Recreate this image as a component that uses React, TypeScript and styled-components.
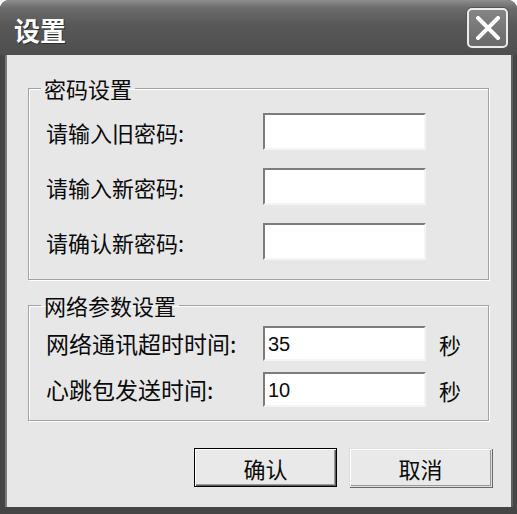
import React from "react"
import styled, { createGlobalStyle } from "styled-components"

const GlobalStyle = createGlobalStyle`
    html, body {
        margin: 0;
        padding: 0;
        background: #ffffff;
    }
    body {
        font-family: "Noto Sans CJK SC", "Liberation Sans", sans-serif;
        color: #0a0a0a;
    }
`

const cjk = `"Noto Sans CJK SC", "Liberation Sans", sans-serif`

interface GroupProps {
    title: string
    $pt: number
    $pb: number
    $gap: number
    children: React.ReactNode
}

const Group: React.FC<GroupProps> = ({ title, $pt, $pb, $gap, children }) => (
    <S.Fieldset $pt={$pt} $pb={$pb}>
        <S.Legend>{title}</S.Legend>
        <S.Grid $gap={$gap}>{children}</S.Grid>
    </S.Fieldset>
)

const CloseIcon = () => (
    <svg width="24" height="24" viewBox="0 0 24 24">
        <path d="M2 2 L22 22 M22 2 L2 22" stroke="#ffffff" strokeWidth="4" strokeLinecap="square" />
    </svg>
)

export default function App() {
    return (
        <>
            <GlobalStyle />
            <S.Window>
                <S.TitleBar>
                    <S.Title>设置</S.Title>
                    <S.CloseButton aria-label="关闭">
                        <CloseIcon />
                    </S.CloseButton>
                </S.TitleBar>
                <S.Body>
                    <Group title="密码设置" $pt={14} $pb={19} $gap={18}>
                        <S.Label $size={22}>请输入旧密码:</S.Label>
                        <S.Input type="password" $h={37} />
                        <span />
                        <S.Label $size={22}>请输入新密码:</S.Label>
                        <S.Input type="password" $h={37} />
                        <span />
                        <S.Label $size={22}>请确认新密码:</S.Label>
                        <S.Input type="password" $h={37} />
                        <span />
                    </Group>
                    <Group title="网络参数设置" $pt={10} $pb={13} $gap={11}>
                        <S.Label $size={23}>网络通讯超时时间:</S.Label>
                        <S.Input defaultValue="35" $h={35} />
                        <S.Unit>秒</S.Unit>
                        <S.Label $size={23}>心跳包发送时间:</S.Label>
                        <S.Input defaultValue="10" $h={35} />
                        <S.Unit>秒</S.Unit>
                    </Group>
                    <S.ButtonRow>
                        <S.Button $default>确认</S.Button>
                        <S.Button>取消</S.Button>
                    </S.ButtonRow>
                </S.Body>
            </S.Window>
        </>
    )
}

const S = {
    Window: styled.div`
        width: 517px;
        height: 514px;
        display: flex;
        flex-direction: column;
        background: #454545;
        border-radius: 9px 9px 0 0;
        overflow: hidden;
        box-sizing: border-box;
    `,
    TitleBar: styled.div`
        height: 55px;
        flex: none;
        display: flex;
        align-items: center;
        justify-content: space-between;
        padding: 0 9px 0 14px;
        box-sizing: border-box;
        background: linear-gradient(to bottom, #8e8e8e 0%, #6c6c6c 14%, #585858 45%, #4e4e4e 100%);
    `,
    Title: styled.div`
        font-family: ${cjk};
        font-size: 26px;
        font-weight: bold;
        color: #ffffff;
        line-height: 1;
        margin-top: 5px;
        text-shadow: 1px 1px 0 #2e2e2e;
    `,
    CloseButton: styled.button`
        width: 41px;
        height: 40px;
        margin-top: 1px;
        padding: 0;
        display: flex;
        align-items: center;
        justify-content: center;
        border: 2px solid #ececec;
        border-radius: 5px;
        background: linear-gradient(to bottom, #858585, #6a6a6a);
        box-shadow: 0 0 0 1px #555;
        box-sizing: border-box;
    `,
    Body: styled.div`
        flex: 1;
        margin: 0 6px 7px 7px;
        background: #e7e7e7;
        box-shadow: -2px 0 0 #7a7a7a, 2px 0 0 #5e5e5e;
        display: flex;
        flex-direction: column;
        padding: 22px 22px 0 21px;
        gap: 14px;
    `,
    Fieldset: styled.fieldset<{ $pt: number; $pb: number }>`
        margin: 0;
        min-width: 0;
        padding: ${(p) => p.$pt}px 0 ${(p) => p.$pb}px 17px;
        border: 1px solid #a2a2a2;
        box-shadow: inset 1px 1px 0 #ffffff, 1px 1px 0 #ffffff;
    `,
    Legend: styled.legend`
        font-family: ${cjk};
        font-size: 22px;
        line-height: 22px;
        padding: 0 3px;
        margin-left: -5px;
        color: #0a0a0a;
    `,
    Grid: styled.div<{ $gap: number }>`
        display: grid;
        grid-template-columns: 217px 163px auto;
        row-gap: ${(p) => p.$gap}px;
        align-items: center;
    `,
    Label: styled.label<{ $size: number }>`
        font-family: ${cjk};
        font-size: ${(p) => p.$size}px;
        line-height: 1;
        white-space: nowrap;
        color: #0a0a0a;
    `,
    Input: styled.input<{ $h: number }>`
        height: ${(p) => p.$h}px;
        width: 163px;
        box-sizing: border-box;
        padding: 2px 0 0 3px;
        border-style: solid;
        border-width: 2px;
        border-color: #7c7c7c #f4f4f4 #f4f4f4 #7c7c7c;
        background: #ffffff;
        font-family: "Liberation Sans", Arial, sans-serif;
        font-size: 20px;
        color: #0a0a0a;
        outline: none;
    `,
    Unit: styled.span`
        font-family: ${cjk};
        font-size: 22px;
        line-height: 1;
        margin-left: 13px;
        color: #0a0a0a;
    `,
    ButtonRow: styled.div`
        display: flex;
        justify-content: flex-end;
        gap: 12px;
        margin-top: 13px;
        padding-right: 0;
        margin-right: -3px;
    `,
    Button: styled.button<{ $default?: boolean }>`
        width: 143px;
        height: 39px;
        box-sizing: border-box;
        padding: 0;
        font-family: ${cjk};
        font-size: 22px;
        line-height: 1;
        color: #0a0a0a;
        background: #e9e9e9;
        border: 1px solid ${(p) => (p.$default ? "#000000" : "#dedede")};
        box-shadow: ${(p) =>
            p.$default
                ? "inset 1px 1px 0 #ffffff, inset -1px -1px 0 #5a5a5a, inset -2px -2px 0 #9a9a9a"
                : "inset 1px 1px 0 #ffffff, inset -1px -1px 0 #9a9a9a, 1px 1px 0 #6a6a6a"};
    `
}
